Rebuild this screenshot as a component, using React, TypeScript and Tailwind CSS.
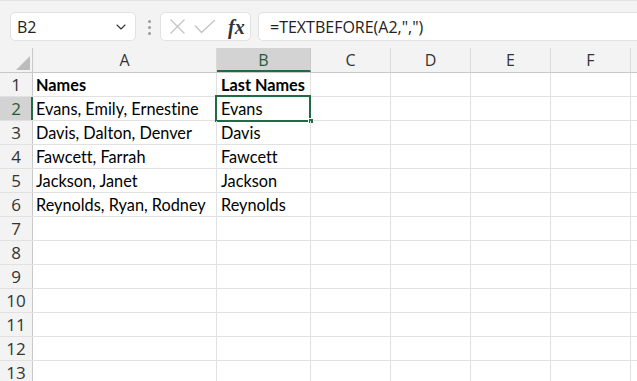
import { ChevronDown } from "lucide-react";

const COLS = [
  { key: "A", w: "w-[184px]" },
  { key: "B", w: "w-[94px]" },
  { key: "C", w: "w-[80px]" },
  { key: "D", w: "w-[80px]" },
  { key: "E", w: "w-[80px]" },
  { key: "F", w: "w-[80px]" },
];

const DATA: Record<number, string[]> = {
  1: ["Names", "Last Names"],
  2: ["Evans, Emily, Ernestine", "Evans"],
  3: ["Davis, Dalton, Denver", "Davis"],
  4: ["Fawcett, Farrah", "Fawcett"],
  5: ["Jackson, Janet", "Jackson"],
  6: ["Reynolds, Ryan, Rodney", "Reynolds"],
};

const ui = "font-['Open_Sans',sans-serif]";
const cellFont = "font-['Lato',sans-serif] [font-variant-ligatures:none]";

function Toolbar() {
  return (
    <div className="flex h-[48px] items-start border-t border-[#e3e3e3] bg-[#f3f3f3] pt-[11px]">
      {/* Name box */}
      <div className="ml-[10px] flex h-[29px] w-[126px] items-center justify-between rounded-[5px] border border-[#e2e2e2] bg-white pl-[6px] pr-[6px]">
        <span className={`${ui} text-[16px] text-[#222]`}>B2</span>
        <ChevronDown size={16} strokeWidth={1.6} className="text-[#333]" />
      </div>

      {/* Grip */}
      <div className="ml-[10px] mt-[8px] flex w-[6px] flex-col items-center gap-[3px]">
        <span className="h-[3px] w-[3px] rounded-full bg-[#9a9a9a]" />
        <span className="h-[3px] w-[3px] rounded-full bg-[#9a9a9a]" />
        <span className="h-[3px] w-[3px] rounded-full bg-[#9a9a9a]" />
      </div>

      {/* Cancel / enter / fx */}
      <div className="ml-[8px] flex h-[29px] w-[91px] items-center rounded-[5px] border border-[#e2e2e2] bg-white pl-[8px]">
        <svg width="17" height="17" viewBox="0 0 17 17" className="shrink-0">
          <path d="M1.5 1.5 L15.5 15.5 M15.5 1.5 L1.5 15.5" stroke="#c4c4c4" strokeWidth="1.3" fill="none" />
        </svg>
        <svg width="22" height="15" viewBox="0 0 22 15" className="ml-[8px] shrink-0">
          <path d="M1 6.5 L7.5 13.5 L21 1" stroke="#c4c4c4" strokeWidth="1.3" fill="none" />
        </svg>
        <span className="ml-[12px] font-['Liberation_Serif',serif] text-[20px] font-bold italic leading-none text-[#333]">
          fx
        </span>
      </div>

      {/* Formula input */}
      <div className="ml-[7px] flex h-[29px] flex-1 items-center rounded-l-[5px] border border-r-0 border-[#e2e2e2] bg-white pl-[11px]">
        <span className={`${ui} text-[16px] text-[#222]`}>=TEXTBEFORE(A2,",")</span>
      </div>
    </div>
  );
}

function HeaderRow() {
  return (
    <div className="flex h-[25px] border-b border-[#c9c9c9] bg-[#f3f3f3]">
      <div className="relative w-[33px] shrink-0 border-r border-[#c9c9c9]">
        <div className="absolute bottom-[2px] right-[2px] h-0 w-0 border-b-[14px] border-l-[14px] border-b-[#bcbcbc] border-l-transparent" />
      </div>
      {COLS.map((c) =>
        c.key === "B" ? (
          <div
            key={c.key}
            className={`${c.w} ${ui} flex shrink-0 items-center justify-center border-b-2 border-r border-b-[#1f6b43] border-r-[#c9c9c9] bg-[#d3d3d3] pt-[1px] text-[16px] text-[#1f5c3a]`}
          >
            {c.key}
          </div>
        ) : (
          <div
            key={c.key}
            className={`${c.w} ${ui} flex shrink-0 items-center justify-center border-r border-[#dadada] text-[16px] text-[#333]`}
          >
            {c.key}
          </div>
        )
      )}
      <div className="flex-1" />
    </div>
  );
}

function Row({ n }: { n: number }) {
  const vals = DATA[n] || [];
  const active = n === 2;
  return (
    <div className="flex h-[24px] border-b border-[#e1e1e1]">
      <div
        className={`${ui} flex w-[33px] shrink-0 items-center justify-center text-[17px] ${
          active
            ? "border-r-2 border-[#1f6b43] bg-[#d3d3d3] pl-[1px] text-[#1f5c3a]"
            : "border-r border-[#c9c9c9] bg-[#f3f3f3] text-[#333]"
        }`}
      >
        {n}
      </div>
      {COLS.map((c, i) => (
        <div
          key={c.key}
          className={`${c.w} ${cellFont} relative flex shrink-0 items-end overflow-visible whitespace-nowrap border-r border-[#e1e1e1] pb-[1px] text-[16.3px] leading-[20px] text-black ${
            i === 0 ? "pl-[3px]" : "pl-[4px]"
          } ${n === 1 ? "font-bold" : ""}`}
        >
          {vals[i] ?? ""}
          {active && c.key === "B" && (
            <>
              <div className="pointer-events-none absolute -bottom-[2px] -left-[2px] -right-[1px] -top-[2px] border-2 border-[#1f6b43]" />
              <div className="absolute -bottom-[4px] -right-[4px] h-[6px] w-[6px] border border-white bg-[#1f6b43]" />
            </>
          )}
        </div>
      ))}
      <div className="flex-1" />
    </div>
  );
}

export default function App() {
  return (
    <div className="h-[381px] w-[637px] overflow-hidden bg-white">
      <Toolbar />
      <HeaderRow />
      {Array.from({ length: 13 }, (_, i) => (
        <Row key={i + 1} n={i + 1} />
      ))}
    </div>
  );
}
